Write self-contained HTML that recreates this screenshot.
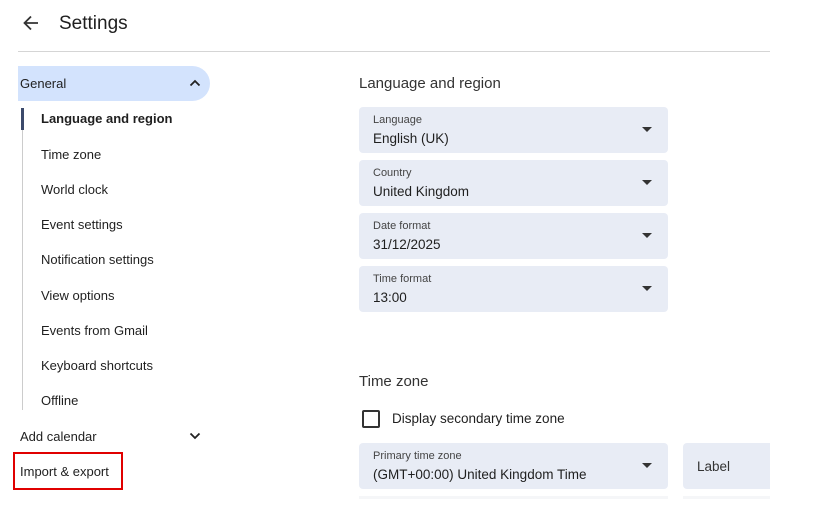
<!DOCTYPE html><html><head><style>
body{margin:0;width:823px;height:505px;background:#fff;font-family:"Liberation Sans",Arial,sans-serif;color:#1f1f1f;position:relative;overflow:hidden}
.a{position:absolute}
.nav{position:absolute;left:41px;font-size:13px;color:#1f1f1f}
.f{position:absolute;left:359px;width:309px;height:46px;background:#e8ecf5;border-radius:4px}
.f .l{position:absolute;left:14px;top:7px;font-size:11px;color:#444}
.f .v{position:absolute;left:14px;top:24px;font-size:13.5px;color:#1f1f1f}
.f .t{position:absolute;right:16px;top:20px;width:0;height:0;border-left:5px solid transparent;border-right:5px solid transparent;border-top:5px solid #333}
</style></head><body>
<svg class="a" style="left:22px;top:14px" width="18" height="18" viewBox="0 0 18 18"><path d="M16 9H3M9 2.5L2.5 9 9 15.5" stroke="#333" stroke-width="1.8" fill="none"/></svg>
<div class="a" style="left:59px;top:13px;font-size:19px;color:#1f1f1f">Settings</div>
<div class="a" style="left:18px;top:51px;width:752px;height:1px;background:#d5d5d5"></div>
<div class="a" style="left:18px;top:66px;width:192px;height:35px;background:#d3e3fd;border-radius:0 18px 18px 0"></div>
<div class="a" style="left:20px;top:76px;font-size:13px">General</div>
<svg class="a" style="left:189px;top:79px" width="12" height="8"><path d="M1.5 6.5L6 2l4.5 4.5" stroke="#222" stroke-width="1.8" fill="none"/></svg>
<div class="a" style="left:22px;top:108px;width:1px;height:302px;background:#ccc"></div>
<div class="a" style="left:21px;top:108px;width:3px;height:22px;background:#3c4a6b"></div>
<div class="nav" style="top:111px;font-weight:bold;font-size:13px;color:#1f1f1f">Language and region</div>
<div class="nav" style="top:147px">Time zone</div>
<div class="nav" style="top:182px">World clock</div>
<div class="nav" style="top:217px">Event settings</div>
<div class="nav" style="top:252px">Notification settings</div>
<div class="nav" style="top:288px">View options</div>
<div class="nav" style="top:323px">Events from Gmail</div>
<div class="nav" style="top:358px">Keyboard shortcuts</div>
<div class="nav" style="top:393px">Offline</div>
<div class="a" style="left:20px;top:429px;font-size:13px">Add calendar</div>
<svg class="a" style="left:189px;top:432px" width="12" height="8"><path d="M1.5 1.5L6 6l4.5-4.5" stroke="#222" stroke-width="1.8" fill="none"/></svg>
<div class="a" style="left:13px;top:452px;width:106px;height:34px;border:2px solid #e00000"></div>
<div class="a" style="left:20px;top:464px;font-size:13px">Import &amp; export</div>
<div class="a" style="left:359px;top:75px;font-size:15px;color:#333">Language and region</div>
<div class="f" style="top:107px"><div class="l">Language</div><div class="v">English (UK)</div><div class="t"></div></div>
<div class="f" style="top:160px"><div class="l">Country</div><div class="v">United Kingdom</div><div class="t"></div></div>
<div class="f" style="top:213px"><div class="l">Date format</div><div class="v">31/12/2025</div><div class="t"></div></div>
<div class="f" style="top:266px"><div class="l">Time format</div><div class="v">13:00</div><div class="t"></div></div>
<div class="a" style="left:359px;top:373px;font-size:15px;color:#333">Time zone</div>
<div class="a" style="left:362px;top:410px;width:14px;height:14px;border:2px solid #333;border-radius:2px"></div>
<div class="a" style="left:392px;top:411px;font-size:13.5px">Display secondary time zone</div>
<div class="f" style="top:443px"><div class="l">Primary time zone</div><div class="v">(GMT+00:00) United Kingdom Time</div><div class="t"></div></div>
<div class="a" style="left:683px;top:443px;width:87px;height:46px;background:#e8ecf5;border-radius:4px 0 0 4px"></div>
<div class="a" style="left:697px;top:459px;font-size:13.5px;color:#333">Label</div>
<div class="a" style="left:359px;top:496px;width:309px;height:3px;background:#f5f6f8"></div>
<div class="a" style="left:683px;top:496px;width:87px;height:3px;background:#f5f6f8"></div>
</body></html>
